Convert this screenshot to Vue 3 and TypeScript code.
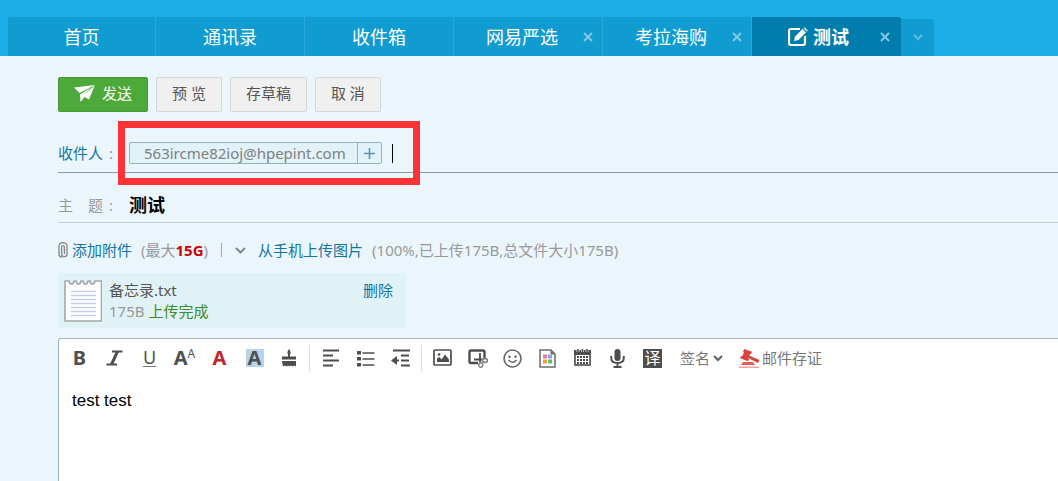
<script setup lang="ts">
import { ref } from 'vue'

interface Tab {
  title: string
  closable: boolean
  active?: boolean
}

const tabs: Tab[] = [
  { title: '首页', closable: false },
  { title: '通讯录', closable: false },
  { title: '收件箱', closable: false },
  { title: '网易严选', closable: true },
  { title: '考拉海购', closable: true },
  { title: '测试', closable: true, active: true },
]

const recipient = ref('')
const subject = ref('测试')
</script>

<template>
  <div class="page">
    <header class="header">
      <nav class="tabs" aria-label="标签页">
        <div v-for="tab in tabs" :key="tab.title" class="tab" :class="{ active: tab.active, closable: tab.closable }">
          <button type="button" class="tab-title">
            <svg v-if="tab.active" class="compose-icon" width="20" height="20" viewBox="0 0 20 20" aria-hidden="true">
              <path d="M12 2H3q-2 0-2 2v12q0 2 2 2h12q2 0 2-2V9" fill="none" stroke="#fff" stroke-width="2.2" />
              <path d="M6 14l1-4.500L14.500 2l3.500 3.500L10.500 13z" fill="#fff" />
              <path d="M15.300 1.200L16.500 0L20 3.500L18.800 4.700z" fill="#b9dcec" />
            </svg>
            <span>{{ tab.title }}</span>
          </button>
          <button v-if="tab.closable" type="button" class="tab-close" aria-label="关闭">
            <svg width="10" height="10" viewBox="0 0 10 10"><path d="M1 1l8 8M9 1L1 9" stroke="currentColor" stroke-width="2" /></svg>
          </button>
        </div>
        <button type="button" class="tab-more" aria-label="更多标签">
          <svg width="10" height="7" viewBox="0 0 10 7"><path d="M1 1l4 4 4-4" fill="none" stroke="currentColor" stroke-width="2" /></svg>
        </button>
      </nav>
    </header>

    <main class="compose">
      <div class="actions">
        <button type="button" class="btn send">
          <svg width="21" height="17" viewBox="0 0 21 17" aria-hidden="true">
            <path d="M0 2.500L21 0L5.500 8z" fill="#fff" />
            <path d="M21 0L15 14.500L10.500 12L6.500 17L6 9.500L17 2.500L9 11z" fill="#fff" />
          </svg>
          发送
        </button>
        <button type="button" class="btn">预 览</button>
        <button type="button" class="btn">存草稿</button>
        <button type="button" class="btn">取 消</button>
      </div>

      <div class="field recipients">
        <label class="field-label link" for="to"><span>收件人</span><span>:</span></label>
        <div class="chip">
          <span class="address">563ircme82ioj@hpepint.com</span>
          <button type="button" class="chip-add" aria-label="添加联系人">
            <svg width="11" height="11" viewBox="0 0 11 11"><path d="M5.500 0v11M0 5.500h11" stroke="#5f93b8" stroke-width="1.600" /></svg>
          </button>
        </div>
        <span class="caret"></span>
        <input id="to" v-model="recipient" class="text-input" type="text" />
        <div class="highlight"></div>
      </div>

      <div class="field subject">
        <label class="field-label" for="subject"><span class="spread"><i>主</i><i>题</i></span><span>:</span></label>
        <input id="subject" v-model="subject" class="text-input strong" type="text" />
      </div>

      <div class="attach-bar">
        <svg width="10" height="16" viewBox="0 0 10 16" aria-hidden="true">
          <path d="M1 14V4a4 3.500 0 0 1 8 0v8a2.700 2.700 0 0 1-5.400 0V5a1.400 1.400 0 0 1 2.800 0v7M1 12q0 3 3 3.300" fill="none" stroke="#858585" stroke-width="1.300" />
        </svg>
        <a href="#" class="add-link">添加附件</a>
        <span class="limit">(最大<b>15G</b>)</span>
        <span class="bar"></span>
        <button type="button" class="plain" aria-label="更多附件选项">
          <svg width="11" height="7" viewBox="0 0 11 7"><path d="M1 1l4.500 4.500L10 1" fill="none" stroke="#76828a" stroke-width="1.800" /></svg>
        </button>
        <a href="#" class="phone-link">从手机上传图片</a>
        <span>(100%,已上传175B,总文件大小175B)</span>
      </div>

      <div class="attachment">
        <svg width="38" height="42" viewBox="0 0 38 42" aria-hidden="true">
          <path d="M1 1h4q.5 3 2.500 3t2.500-3h2q.5 3 2.500 3t2.500-3h2q.5 3 2.500 3t2.500-3h2q.5 3 2.500 3t2.500-3h6.500v40H1z" fill="#fff" stroke="#a5a7a9" stroke-width="1.600" />
          <path d="M7 11.500h25M7 15.500h25M7 19.500h25M7 23.500h25M7 27.500h25M7 31.500h25M7 35.500h25" stroke="#c3d0e8" stroke-width="1.500" />
        </svg>
        <div class="file">
          <div class="file-name">备忘录.txt</div>
          <div class="file-state">175B <span>上传完成</span></div>
        </div>
        <a href="#" class="remove">删除</a>
      </div>

      <section class="editor">
        <div class="toolbar" role="toolbar" aria-label="格式">
          <button type="button" class="tool glyph" aria-label="加粗">B</button>
          <button type="button" class="tool glyph" aria-label="斜体">
            <svg width="17" height="16" viewBox="0 0 17 16" fill="none" stroke="#505050">
              <path d="M6 1.500h10.500M.5 14.500H11" stroke-width="1.800" />
              <path d="M11.500 1.500l-6 13" stroke-width="3" />
            </svg>
          </button>
          <button type="button" class="tool glyph under" aria-label="下划线"><span>U</span></button>
          <button type="button" class="tool glyph" aria-label="字号">A<small>A</small></button>
          <button type="button" class="tool glyph red" aria-label="字体颜色">A</button>
          <button type="button" class="tool glyph" aria-label="背景色"><span class="marked">A</span></button>
          <button type="button" class="tool" aria-label="格式刷">
            <svg width="16" height="18" viewBox="0 0 16 18" fill="#4d4d4d">
              <path d="M7 8V5.500Q5.500 3 8 0q2.500 3 1 5.500V8z" />
              <path d="M1 7.500h14v3H1zM1 12h14v5.500l-2-1-1.500 1-1.500-1-1.500 1-1.500-1-1.500 1-1.500-1-2 1z" />
            </svg>
          </button>
          <span class="divider"></span>
          <button type="button" class="tool" aria-label="对齐">
            <svg width="18" height="18" viewBox="0 0 18 18"><path d="M1 1.500h16M1 6.500h10M1 11.500h16M1 16.500h10" stroke="#4d4d4d" stroke-width="2.200" /></svg>
          </button>
          <button type="button" class="tool" aria-label="列表">
            <svg width="18" height="18" viewBox="0 0 18 18">
              <path d="M5.500 4h12M5.500 10h12M5.500 16h12" stroke="#4d4d4d" stroke-width="1.600" />
              <path d="M0 2h4v3.500H0zM0 8h4v3.500H0zM0 14h4v3.500H0z" fill="#4d4d4d" />
            </svg>
          </button>
          <button type="button" class="tool" aria-label="缩进">
            <svg width="20" height="18" viewBox="0 0 20 18">
              <path d="M2 1.500h17M10 6.500h8M10 11.500h8M10 16.500h9M4 11.500h4" stroke="#4d4d4d" stroke-width="2.200" />
              <path d="M0 11.500L6 7v9z" fill="#4d4d4d" />
            </svg>
          </button>
          <span class="divider"></span>
          <button type="button" class="tool" aria-label="图片">
            <svg width="19" height="18" viewBox="0 0 19 18">
              <rect x="1" y="1" width="17" height="15" rx="1" fill="#fff" stroke="#4d4d4d" stroke-width="1.700" />
              <path d="M4 13V9.500l2.500-1.500L8.500 10.500L12 5.500l4 5V13z" fill="#4d4d4d" /><circle cx="6" cy="5.500" r="1.300" fill="#4d4d4d" />
            </svg>
          </button>
          <button type="button" class="tool" aria-label="截屏">
            <svg width="20" height="19" viewBox="0 0 20 19" fill="none" stroke="#4d4d4d">
              <path d="M10 14H3q-1.500 0-1.500-1.500V3q0-1.500 1.500-1.500h12q1.500 0 1.500 1.500v6" stroke-width="2.400" />
              <path d="M12 4v9M6 10.500h9" stroke-width="1.800" />
              <ellipse cx="17" cy="11.500" rx="2.500" ry="1.900" stroke="#858585" stroke-width="1.700" />
              <ellipse cx="12.800" cy="16" rx="2" ry="2.300" stroke="#858585" stroke-width="1.500" />
            </svg>
          </button>
          <button type="button" class="tool" aria-label="表情">
            <svg width="19" height="19" viewBox="0 0 19 19">
              <circle cx="9.500" cy="9.500" r="8.500" fill="none" stroke="#686868" stroke-width="1.600" />
              <path d="M5.500 11q4 4.500 8 0" fill="none" stroke="#686868" stroke-width="1.500" />
              <circle cx="6.500" cy="7.800" r="1.200" fill="#686868" /><circle cx="12.500" cy="7.800" r="1.200" fill="#686868" />
            </svg>
          </button>
          <button type="button" class="tool" aria-label="信纸">
            <svg width="17" height="19" viewBox="0 0 17 19">
              <path d="M1 1h11l4 4v13H1z" fill="#fff" stroke="#6b6b6b" stroke-width="1.500" />
              <path d="M11.500 1v4.500H16z" fill="#6b6b6b" />
              <path d="M4 5.500h4v4H4z" fill="#e87ba0" /><path d="M9 5.500h4v4H9z" fill="#8fa3f0" />
              <path d="M4 10.500h4v4H4z" fill="#f59a3c" /><path d="M9 10.500h4v4H9z" fill="#58c26b" />
            </svg>
          </button>
          <button type="button" class="tool" aria-label="日期">
            <svg width="17" height="18" viewBox="0 0 17 18">
              <rect x="1" y="3" width="15" height="13" fill="#fff" stroke="#4d4d4d" stroke-width="1.600" />
              <path d="M0 1h17v5H0z" fill="#4d4d4d" />
              <path d="M4 0v3M8.500 0v3M13 0v3" stroke="#fff" stroke-width="2.800" /><path d="M4 0v3M8.500 0v3M13 0v3" stroke="#4d4d4d" stroke-width="1.600" />
              <path d="M3 8h11M3 11h11M3 14h11" stroke="#4d4d4d" stroke-width="2" stroke-dasharray="2 1" />
            </svg>
          </button>
          <button type="button" class="tool" aria-label="语音">
            <svg width="15" height="19" viewBox="0 0 15 19">
              <rect x="4.500" y="0" width="6" height="12" rx="3" fill="#4d4d4d" />
              <path d="M1.200 7v2q0 5 6.300 5t6.300-5V7M7.500 14v3.500M3.500 18h8" fill="none" stroke="#4d4d4d" stroke-width="1.900" />
            </svg>
          </button>
          <button type="button" class="tool" aria-label="翻译"><span class="translate">译</span></button>
          <button type="button" class="tool-text signature">签名
            <svg width="10" height="7" viewBox="0 0 10 7" aria-hidden="true"><path d="M1 1l4 4 4-4" fill="none" stroke="#606060" stroke-width="2" /></svg>
          </button>
          <button type="button" class="tool-text evidence">
            <svg width="21" height="19" viewBox="0 0 21 19" aria-hidden="true">
              <path d="M5.200 0L13 2.800L12 5.300L11 5L9.200 9.500L10.200 10L9 12.300L1.200 9.300L2.200 7L3.300 7.300L5 2.900L4 2.500z" fill="#d9433d" />
              <path d="M10 6.500l10.500 4.500-1.500 3L9 9z" fill="#d9433d" />
              <path d="M4 13h10l2 3H2z" fill="#e35d57" /><path d="M0 17.500h20v1.500H0z" fill="#f0a29e" />
            </svg>
            邮件存证
          </button>
        </div>
        <div class="body" contenteditable="true" role="textbox" aria-label="正文">test test</div>
      </section>
    </main>
  </div>
</template>

<style>
body {
  background: #ebf6fc;
}
</style>

<style scoped>
.page {
  display: flex;
  flex-direction: column;
  min-height: 100vh;
  overflow: hidden;
  background: #ebf6fc;
  color: #999;
  font: 15px/22px "Noto Sans", "Noto Sans CJK SC", sans-serif;
}
button,
input {
  margin: 0;
  padding: 0;
  border: 0;
  background: none;
  color: inherit;
  font: inherit;
  outline: none;
}
svg {
  display: block;
  flex: none;
}
a {
  color: #1474a4;
  text-decoration: none;
}
.header {
  padding: 17px 0 0 8px;
  background: #1cace6;
}
.tabs {
  display: flex;
  align-items: flex-end;
}
.tab {
  display: flex;
  box-sizing: border-box;
  width: 149px;
  height: 39px;
  border-right: 1px solid #2ba9dc;
  background: #109bd1;
  color: #fff;
  font-size: 18px;
}
.tab:first-child {
  width: 148px;
  border-top-left-radius: 3px;
}
.tab-title {
  display: flex;
  flex: 1;
  align-items: center;
  justify-content: center;
  gap: 5px;
}
.closable .tab-title {
  padding-left: 16px;
}
.tab-close {
  display: flex;
  align-items: center;
  justify-content: center;
  width: 28px;
  color: #83c9e8;
}
.tab.active {
  border-right: 0;
  border-top-right-radius: 3px;
  background: #007cad;
  font-weight: 700;
}
.active .tab-close {
  width: 32px;
}
.tab-more {
  display: flex;
  align-items: center;
  justify-content: center;
  width: 33px;
  height: 37px;
  border-top-right-radius: 3px;
  background: #109bd1;
  color: #5cbde4;
}
.compose {
  display: flex;
  flex: 1;
  flex-direction: column;
  padding: 21px 0 0 58px;
}
.actions {
  display: flex;
  gap: 8px;
}
.btn {
  display: flex;
  align-items: center;
  box-sizing: border-box;
  height: 35px;
  padding: 0 15px 3px;
  border: 1px solid #d5d8da;
  border-radius: 2px;
  background: #f0f0f0;
  color: #555;
}
.send {
  gap: 7px;
  border-color: #429c2f;
  background: #4ca93a;
  color: #fff;
}
.field {
  display: flex;
  align-items: center;
  border-bottom: 1px solid #c3ccd1;
}
.recipients {
  position: relative;
  height: 38px;
  margin-top: 22px;
  border-color: #8d9ba1;
}
.highlight {
  position: absolute;
  top: -13px;
  left: 60px;
  box-sizing: border-box;
  width: 302px;
  height: 64px;
  border: 7px solid #fc3336;
  pointer-events: none;
}
.field-label {
  display: flex;
  flex: none;
  gap: 6px;
  width: 71px;
}
.link {
  color: #1474a4;
}
.field-label span:last-child {
  color: #999;
}
.spread {
  display: flex;
  justify-content: space-between;
  width: 45px;
}
.spread i {
  font-style: normal;
}
.chip {
  display: flex;
  flex: none;
  box-sizing: border-box;
  height: 22px;
  border: 1px solid #8cb4c4;
  border-radius: 2px;
  background: #e1f2f8;
  color: #808080;
  line-height: 20px;
}
.address {
  padding: 0 11px 0 14px;
}
.chip-add {
  display: flex;
  align-items: center;
  justify-content: center;
  width: 24px;
  border-left: 1px solid #8cb4c4;
}
.caret {
  width: 1px;
  height: 19px;
  margin-left: 10px;
  background: #000;
}
.text-input {
  flex: 1;
  min-width: 0;
  color: #000;
}
.subject {
  height: 34px;
  margin-top: 15px;
}
.strong {
  font-size: 18px;
  font-weight: 700;
}
.attach-bar {
  display: flex;
  align-items: center;
  margin-top: 16px;
  white-space: nowrap;
}
.add-link {
  margin-left: 4px;
}
.limit {
  margin-left: 9px;
}
.limit b {
  color: #c00;
}
.bar {
  width: 1px;
  height: 14px;
  margin: 0 13px;
  background: #a3aaae;
}
.phone-link {
  margin: 0 9px 0 12px;
}
.attachment {
  display: flex;
  gap: 7px;
  align-items: center;
  box-sizing: border-box;
  width: 348px;
  height: 55px;
  margin-top: 12px;
  padding: 0 13px 0 6px;
  background: #e1f2f7;
}
.file {
  flex: 1;
  line-height: 21px;
}
.file-name {
  color: #555;
}
.file-state span {
  color: #3c8a2a;
}
.remove {
  align-self: flex-start;
  margin-top: 6px;
}
.editor {
  flex: 1;
  margin-top: 10px;
  border-top: 1px solid #a6b5c4;
  border-left: 1px solid #a6b5c4;
  border-top-left-radius: 3px;
  background: #fff;
}
.toolbar {
  display: flex;
  align-items: center;
  height: 38px;
  padding-left: 2px;
}
.tool {
  display: flex;
  flex: none;
  align-items: center;
  justify-content: center;
  box-sizing: border-box;
  width: 35px;
  height: 30px;
}
.glyph {
  padding-left: 2px;
  color: #505050;
  font-size: 20px;
  font-weight: 700;
}
.glyph small {
  margin-bottom: 8px;
  font-size: 12px;
  font-weight: 400;
}
.under span {
  border-bottom: 1px solid #777;
  font-size: 18px;
  font-weight: 400;
  line-height: 17px;
}
.red {
  color: #c0272d;
}
.marked {
  width: 18px;
  background: #b9d3e8;
  line-height: 18px;
}
.divider {
  width: 1px;
  height: 27px;
  margin: 0 3px;
  background: #ddd;
}
.translate {
  width: 19px;
  background: #4d4d4d;
  color: #fff;
  font-size: 16px;
  line-height: 19px;
}
.tool-text {
  display: flex;
  align-items: center;
  color: #777;
}
.signature {
  gap: 3px;
  margin-left: 10px;
}
.evidence {
  gap: 2px;
  margin-left: 16px;
}
.body {
  padding: 13px;
  color: #000;
  font-family: "Liberation Sans", Arial, sans-serif;
  font-size: 17px;
  outline: none;
}
</style>
